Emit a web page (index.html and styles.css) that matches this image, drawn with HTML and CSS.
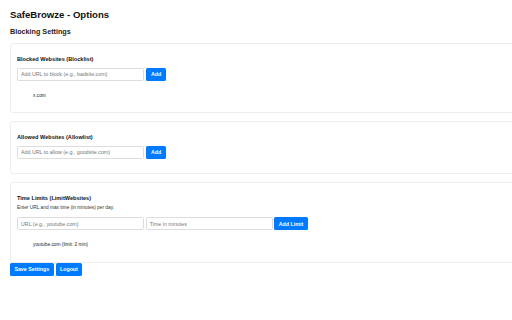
FILE: index.html
```html
<!DOCTYPE html>
<html lang="en">
<head>
  <meta charset="UTF-8">
  <meta name="viewport" content="width=device-width, initial-scale=1.0">
  <title>SafeBrowze - Options</title>
  <link rel="stylesheet" href="styles.css">
</head>
<body>
  <h1>SafeBrowze - Options</h1>
  <h2>Blocking Settings</h2>

  <div class="section">
    <h3>Blocked Websites (Blocklist)</h3>
    <div class="row">
      <input type="text" placeholder="Add URL to block (e.g., badsite.com)">
      <button class="add-btn">Add</button>
    </div>
    <ul class="site-list">
      <li>x.com</li>
    </ul>
  </div>

  <div class="section">
    <h3>Allowed Websites (Allowlist)</h3>
    <div class="row">
      <input type="text" placeholder="Add URL to allow (e.g., goodsite.com)">
      <button class="add-btn">Add</button>
    </div>
    <ul class="site-list"></ul>
  </div>

  <div class="section">
    <h3 class="with-note">Time Limits (LimitWebsites)</h3>
    <p class="note">Enter URL and max time (in minutes) per day.</p>
    <div class="row">
      <input type="text" placeholder="URL (e.g., youtube.com)">
      <input type="number" placeholder="Time in minutes">
      <button>Add Limit</button>
    </div>
    <ul class="site-list">
      <li>youtube.com (limit: 2 min)</li>
    </ul>
  </div>

  <div class="actions">
    <button>Save Settings</button>
    <button>Logout</button>
  </div>
</body>
</html>
```

FILE: styles.css
```css
html {
  overflow: hidden;
}
body {
  font-family: "Liberation Sans", Arial, sans-serif;
  margin: 0;
  padding: 10px 0 0 10px;
  background: #fff;
  color: #222;
}
h1 {
  font-size: 9.6px;
  line-height: 10px;
  margin: 0;
  color: #111;
}
h2 {
  font-size: 7.2px;
  line-height: 8px;
  margin: 7.7px 0 7.3px;
  color: #2a1a1a;
}
.section {
  width: 560px;
  border: 1px solid #eee;
  border-radius: 3px;
  padding: 12px 6px 13.5px;
  margin-bottom: 8px;
}
h3 {
  font-size: 5.6px;
  line-height: 6px;
  margin: 0 0 5.6px;
  color: #111;
}
h3.with-note {
  margin-bottom: 4.3px;
}
.note {
  font-size: 4.8px;
  line-height: 6px;
  margin: 0 0 6px;
  color: #333;
}
.row {
  display: flex;
  gap: 1.7px;
}
input {
  width: 127px;
  height: 13px;
  box-sizing: border-box;
  border: 1px solid #ddd;
  border-radius: 1.6px;
  padding: 0 3px;
  font-family: "Liberation Sans", Arial, sans-serif;
  font-size: 5.3px;
  outline: none;
}
input::placeholder {
  color: #777;
}
input[type="number"]::-webkit-inner-spin-button {
  display: none;
}
button {
  height: 13px;
  padding: 0 4.4px;
  font-family: "Liberation Sans", Arial, sans-serif;
  font-size: 5.3px;
  font-weight: bold;
  color: #fff;
  background-color: #007bff;
  border: none;
  border-radius: 1.6px;
  cursor: pointer;
}
.add-btn {
  padding: 0 5.2px;
}
.site-list {
  list-style: none;
  margin: 0;
  padding: 0 0 0 16px;
}
.site-list:empty {
  height: 1px;
}
.site-list li {
  font-size: 4.8px;
  line-height: 6px;
  margin-top: 12px;
  color: #222;
}
.actions {
  display: flex;
  gap: 2px;
  margin-top: -8px;
}
```
